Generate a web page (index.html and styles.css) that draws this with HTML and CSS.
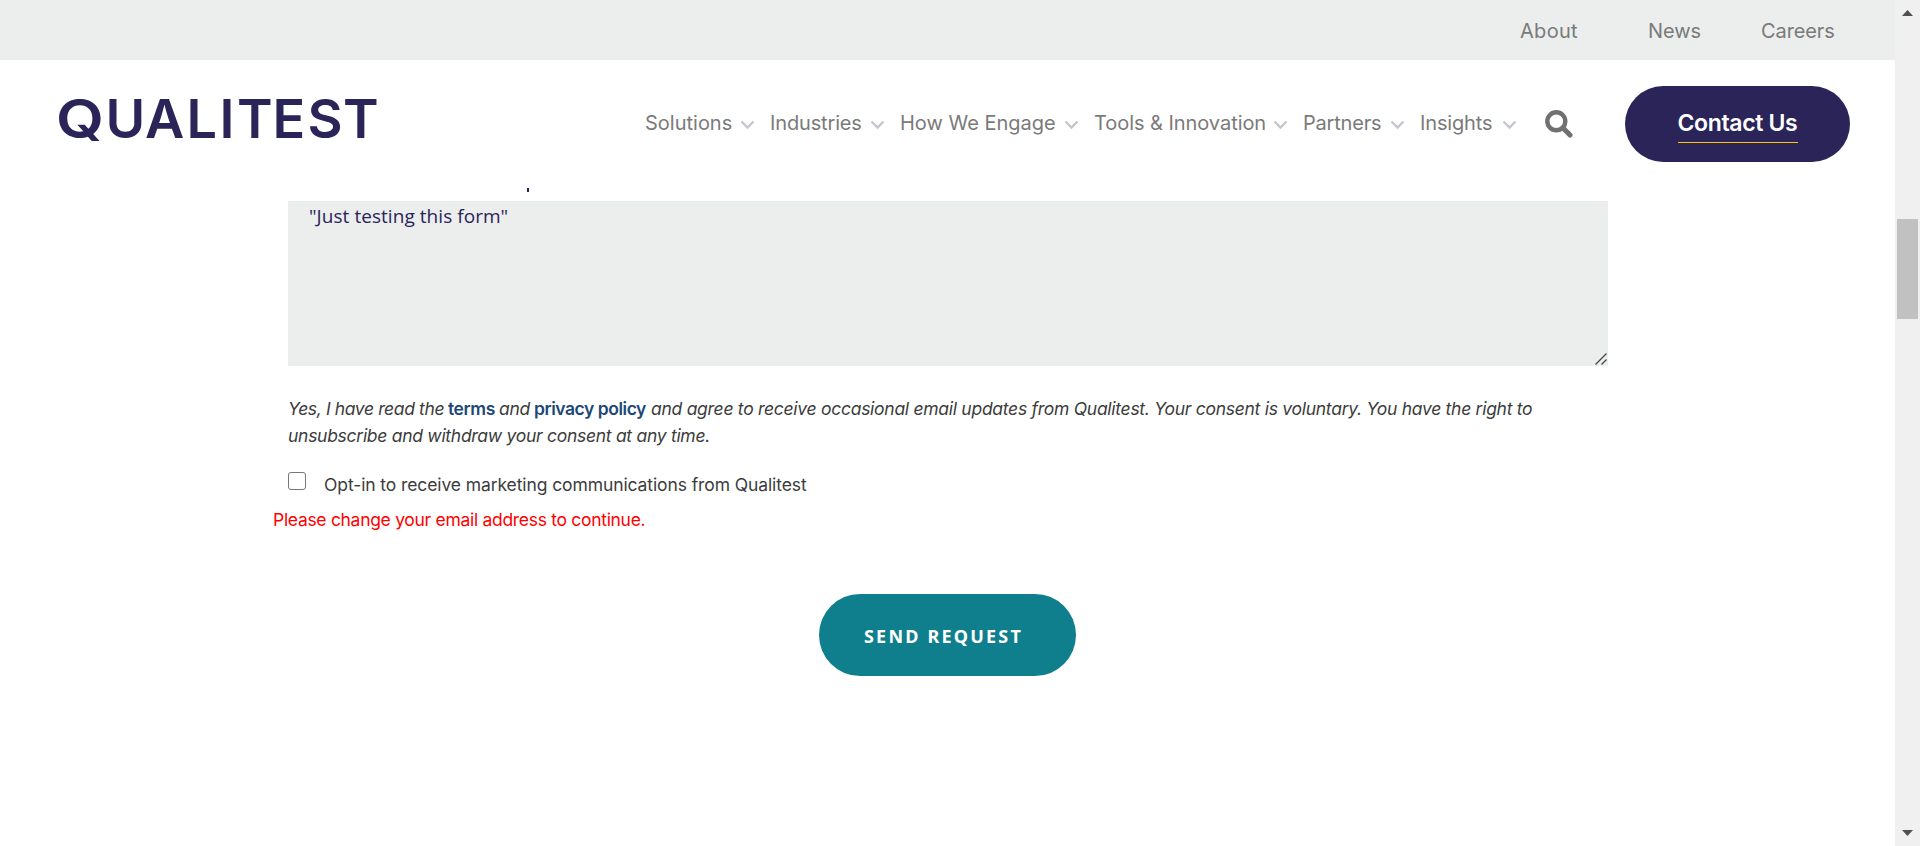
FILE: index.html
```
<!DOCTYPE html>
<html lang="en">
<head>
<meta charset="utf-8">
<title>Qualitest</title>
<link rel="stylesheet" href="styles.css">
</head>
<body>
<div class="page">
  <nav class="topbar">
    <a class="about">About</a><a class="news">News</a><a class="careers">Careers</a>
  </nav>
  <header class="header">
    <svg class="logo" width="350" height="90" viewBox="0 0 350 90">
      <text x="8" y="65" textLength="48" lengthAdjust="spacingAndGlyphs">Q</text><text x="57.5 97 138.5 171.5 189 224.5 259.5 295" y="65">UALITEST</text>
    </svg>
    <nav class="menu">
      <a class="item solutions">Solutions <svg class="chev" viewBox="0 0 15 10"><path d="M1.5 1.5 7.5 7.6 13.5 1.5"/></svg></a>
      <a class="item industries">Industries <svg class="chev" viewBox="0 0 15 10"><path d="M1.5 1.5 7.5 7.6 13.5 1.5"/></svg></a>
      <a class="item engage">How We Engage <svg class="chev" viewBox="0 0 15 10"><path d="M1.5 1.5 7.5 7.6 13.5 1.5"/></svg></a>
      <a class="item tools">Tools &amp; Innovation <svg class="chev" viewBox="0 0 15 10"><path d="M1.5 1.5 7.5 7.6 13.5 1.5"/></svg></a>
      <a class="item partners">Partners <svg class="chev" viewBox="0 0 15 10"><path d="M1.5 1.5 7.5 7.6 13.5 1.5"/></svg></a>
      <a class="item insights">Insights <svg class="chev" viewBox="0 0 15 10"><path d="M1.5 1.5 7.5 7.6 13.5 1.5"/></svg></a>
    </nav>
    <svg class="search" viewBox="0 0 28 28"><circle cx="11.3" cy="11.3" r="9" stroke-width="4.4"/><path d="M18 18l7 7" stroke-width="5"/></svg>
    <a class="contact"><span>Contact Us</span></a>
  </header>
  <main class="form">
    <div class="mark"></div>
    <div class="message">"Just testing this form"
      <svg class="grip" viewBox="0 0 12 12"><path d="M.5 11.5 11.5.5M6.5 11.5l5-5"/></svg>
    </div>
    <p class="consent"><span class="c1">Yes, I have read the</span><b class="c2">terms</b><span class="c3">and</span><b class="c4">privacy policy</b><span class="c5">and agree to receive occasional email updates from Qualitest. Your consent is voluntary. You have the right to</span></p>
    <p class="consent"><span class="c6">unsubscribe and withdraw your consent at any time.</span></p>
    <label class="optin"><span class="box"></span><span>Opt-in to receive marketing communications from Qualitest</span></label>
    <p class="error">Please change your email address to continue.</p>
    <button class="send">SEND REQUEST</button>
  </main>
</div>
<aside class="scrollbar">
  <svg class="arrow" viewBox="0 0 11 6"><path d="M0 6 5.5 0 11 6z"/></svg>
  <div class="thumb"></div>
  <svg class="arrow down" viewBox="0 0 11 6"><path d="M0 0 5.5 6 11 0z"/></svg>
</aside>
</body>
</html>
```
FILE: styles.css
```
* { box-sizing: border-box; }
body { margin: 0; height: 846px; display: flex; overflow: hidden; background: #fff; font-family: Inter, "Open Sans", sans-serif; }
p { margin: 0; }
.page { width: 1895px; }
.topbar { height: 60px; background: #ebeeed; display: flex; padding-left: 1520px; line-height: 63px; font-size: 20px; color: #7a7a7a; }
.about { width: 128px; letter-spacing: .3px; }
.news { width: 113px; letter-spacing: -.1px; }
.careers { letter-spacing: -.1px; }
.header { height: 128px; display: flex; padding-left: 48px; }
.logo { margin-top: 13px; width: 350px; height: 90px; overflow: visible; }
.logo text { font: 600 54px Inter, sans-serif; fill: #2b2459; }
.menu { display: flex; gap: 15px; margin-left: 247px; padding-top: 50px; height: 90px; }
.item { display: flex; justify-content: space-between; align-items: center; white-space: nowrap; font-size: 20px; line-height: 26px; height: 26px; color: #7a7a7a; }
.solutions { width: 110px; }
.industries { width: 115px; letter-spacing: -.15px; }
.engage { width: 179px; }
.tools { width: 194px; letter-spacing: -.05px; }
.partners { width: 102px; letter-spacing: -.2px; }
.insights { width: 97px; letter-spacing: -.15px; }
.chev { width: 15px; height: 10px; margin-top: 3px; fill: none; stroke: #c4c5cd; stroke-width: 2.3; }
.search { width: 28px; height: 28px; margin: 50px 0 0 28px; fill: none; stroke: #707070; stroke-linecap: round; }
.contact { width: 225px; height: 76px; margin: 26px 0 0 52px; border-radius: 38px; background: #2b2459; color: #fff; display: flex; justify-content: center; font-size: 23px; font-weight: 600; letter-spacing: -.35px; }
.contact span { width: 120px; height: 57px; white-space: nowrap; border-bottom: 1px solid #fec809; padding-top: 23px; line-height: 28px; }
.form { padding-left: 288px; display: flex; flex-direction: column; align-items: flex-start; }
.mark { width: 2px; height: 4px; background: #2b2459; margin-left: 239px; }
.message { position: relative; width: 1320px; height: 165px; margin-top: 9px; padding-left: 21px; background: #ebeeed; color: #2b2459; font: 19px/30px "Open Sans", sans-serif; letter-spacing: .05px; }
.grip { position: absolute; right: 1px; bottom: 1px; width: 12px; height: 12px; fill: none; stroke: #444; stroke-width: 1.3; }
.consent { display: flex; height: 27px; line-height: 27px; font-size: 17.5px; font-style: italic; color: #3c3c3c; white-space: nowrap; }
.message + .consent { margin-top: 29px; }
.consent b { font-style: normal; font-weight: 600; color: #1d4876; }
.c1 { width: 160px; letter-spacing: -.38px; }
.c2 { width: 51px; letter-spacing: -.4px; }
.c3 { width: 35px; letter-spacing: -.3px; }
.c4 { width: 117px; letter-spacing: -.45px; }
.c5 { letter-spacing: -.275px; }
.c6 { letter-spacing: -.28px; }
.optin { display: flex; gap: 18px; margin-top: 21px; height: 30px; line-height: 30px; font-size: 17.5px; letter-spacing: -.1px; color: #3c3c3c; }
.box { width: 18px; height: 18px; margin-top: 2px; border: 1.5px solid #767676; border-radius: 3px; }
.error { margin: 5px 0 0 -15px; line-height: 30px; font-size: 17.5px; letter-spacing: -.3px; color: #f00; }
.send { width: 257px; height: 82px; margin: 59px 0 0 531px; padding: 2px 0 0 45px; border: 0; border-radius: 41px; background: #107f8d; color: #fff; text-align: left; font: bold 18px "Noto Sans", sans-serif; letter-spacing: 2.2px; }
.scrollbar { width: 25px; height: 846px; background: #f0f0f0; display: flex; flex-direction: column; align-items: center; padding: 10px 0; }
.arrow { width: 11px; height: 6px; fill: #505050; }
.thumb { width: 21px; height: 100px; margin-top: 203px; background: #c1c1c1; }
.down { margin-top: auto; }
```
